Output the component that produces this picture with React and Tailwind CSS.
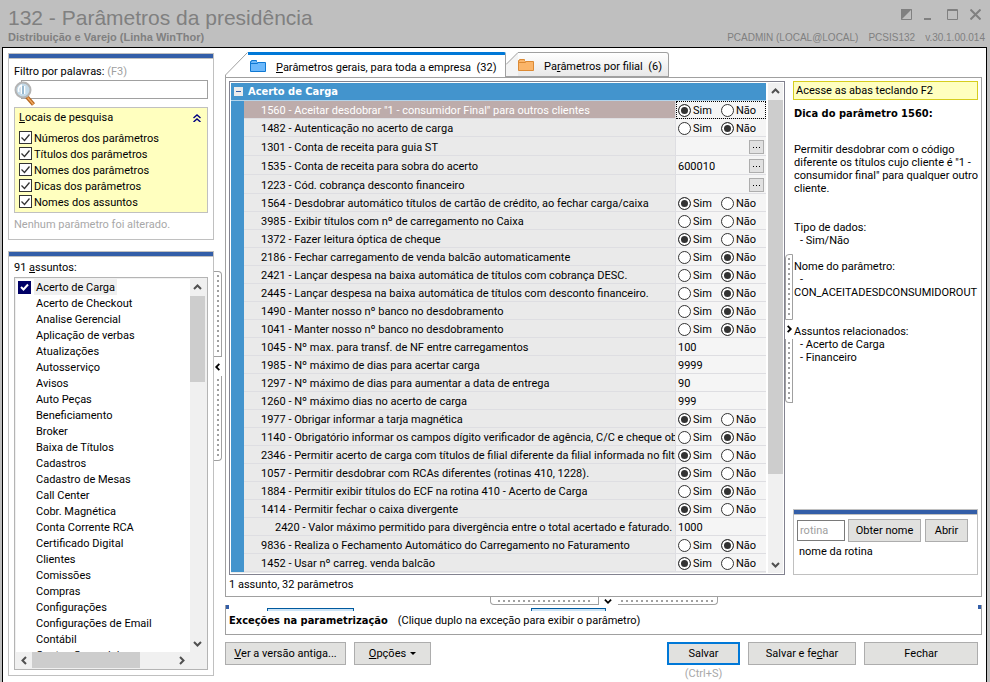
import React from "react";

const params = [
  ["1560", 'Aceitar desdobrar "1 - consumidor Final" para outros clientes', "sim"],
  ["1482", "Autenticação no acerto de carga", "nao"],
  ["1301", "Conta de receita para guia ST", "pick", ""],
  ["1535", "Conta de receita para sobra do acerto", "pick", "600010"],
  ["1223", "Cód. cobrança desconto financeiro", "pick", ""],
  ["1564", "Desdobrar automático títulos de cartão de crédito, ao fechar carga/caixa", "sim"],
  ["3985", "Exibir títulos com nº de carregamento no Caixa", "nenhum"],
  ["1372", "Fazer leitura óptica de cheque", "sim"],
  ["2186", "Fechar carregamento de venda balcão automaticamente", "nao"],
  ["2421", "Lançar despesa na baixa automática de títulos com cobrança DESC.", "nao"],
  ["2445", "Lançar despesa na baixa automática de títulos com desconto financeiro.", "nao"],
  ["1490", "Manter nosso nº banco no desdobramento", "nao"],
  ["1041", "Manter nosso nº banco no desdobramento", "nao"],
  ["1045", "Nº max. para transf. de NF entre carregamentos", "text", "100"],
  ["1985", "Nº máximo de dias para acertar carga", "text", "9999"],
  ["1297", "Nº máximo de dias para aumentar a data de entrega", "text", "90"],
  ["1260", "Nº máximo dias no acerto de carga", "text", "999"],
  ["1977", "Obrigar informar a tarja magnética", "sim"],
  ["1140", "Obrigatório informar os campos dígito verificador de agência, C/C e cheque obr", "nao"],
  ["2346", "Permitir acerto de carga com títulos de filial diferente da filial informada no filtro", "sim"],
  ["1057", "Permitir desdobrar com RCAs diferentes (rotinas 410, 1228).", "sim"],
  ["1884", "Permitir exibir títulos do ECF na rotina 410 - Acerto de Carga", "nao"],
  ["1414", "Permitir fechar o caixa divergente", "sim"],
  ["2420", "Valor máximo permitido para divergência entre o total acertado e faturado.", "text", "1000"],
  ["9836", "Realiza o Fechamento Automático do Carregamento no Faturamento", "nao"],
  ["1452", "Usar nº carreg. venda balcão", "sim"],
];

const subjects = [
  "Acerto de Carga", "Acerto de Checkout", "Analise Gerencial", "Aplicação de verbas",
  "Atualizações", "Autosserviço", "Avisos", "Auto Peças", "Beneficiamento", "Broker",
  "Baixa de Títulos", "Cadastros", "Cadastro de Mesas", "Call Center", "Cobr. Magnética",
  "Conta Corrente RCA", "Certificado Digital", "Clientes", "Comissões", "Compras",
  "Configurações", "Configurações de Email", "Contábil", "Contas Gerenciais",
];

function Chevron({ dir, className = "" }) {
  const d = { up: "M1 6 L4.5 2.5 L8 6", down: "M1 3 L4.5 6.5 L8 3", left: "M6 1 L2.5 4.5 L6 8", right: "M3 1 L6.5 4.5 L3 8" }[dir];
  return (
    <svg width="9" height="9" viewBox="0 0 9 9" className={className} aria-hidden="true">
      <path d={d} fill="none" stroke="currentColor" strokeWidth="2" />
    </svg>
  );
}

function Folder({ fill, stroke }) {
  return (
    <svg width="16" height="13" viewBox="0 0 16 13" aria-hidden="true" className="shrink-0">
      <path d="M.5 11.5V1.5h1v-1h5v1l1 1h8v9z" fill={fill} stroke={stroke} />
      <path d="M1 3.5h6.5l1-1" fill="none" stroke={stroke} />
    </svg>
  );
}

function BlueBar() {
  return <div className="h-[5px] border-b border-[#c0c0c0] bg-[#335ea8]" />;
}

function Radio({ name, label, checked }) {
  return (
    <label className="flex w-[43px] shrink-0 items-center gap-[2px]">
      <input
        type="radio"
        name={name}
        defaultChecked={checked}
        className="size-[13px] shrink-0 appearance-none rounded-full border border-[#333] bg-white checked:bg-[#333] checked:shadow-[inset_0_0_0_2px_white]"
      />
      {label}
    </label>
  );
}

function ParamRow({ row, index }) {
  const [code, title, kind, value] = row;
  const on = index === 0;
  const pick = kind === "pick";
  const free = pick || kind === "text";
  return (
    <tr className={pick ? "h-[19px]" : "h-[18px]"}>
      <td className="bg-[#4394cd] p-0" />
      <th
        scope="row"
        className={`border-r border-b border-[#dedee2] pt-[2px] pr-0 pb-0 text-left font-normal whitespace-nowrap ${code === "2420" ? "pl-[31px]" : "pl-[17px]"} ${on ? "bg-[#bdacab] text-white" : "bg-[#eaeaea]"}`}
      >
        <div className="overflow-hidden">{code} - {title}</div>
      </th>
      <td className={`border-b border-[#dedee2] bg-[#f5f5f5] px-0 pt-[2px] pb-0 ${on ? "outline-1 -outline-offset-1 outline-dotted outline-black" : ""}`}>
        {free ? (
          <div className="flex items-center pr-[2px] pl-[2px]">
            <input aria-label={title} defaultValue={value} className="h-[13px] w-0 grow bg-transparent outline-none" />
            {pick && (
              <button aria-label="Escolher" className="flex h-[14px] w-[15px] items-center justify-center gap-[2px] border border-[#adadad] bg-[#e1e1e1]">
                <i className="size-px bg-black" />
                <i className="size-px bg-black" />
                <i className="size-px bg-black" />
              </button>
            )}
          </div>
        ) : (
          <div className="flex pl-[2px]">
            <Radio name={`p${code}`} label="Sim" checked={kind === "sim"} />
            <Radio name={`p${code}`} label="Não" checked={kind === "nao"} />
          </div>
        )}
      </td>
    </tr>
  );
}

function VScroll({ thumb }) {
  return (
    <div className="flex w-[15px] shrink-0 flex-col items-center bg-[#f0f0f0] text-[#505050]">
      <div className="flex h-[17px] items-center"><Chevron dir="up" /></div>
      <div className={`w-full bg-[#cdcdcd] ${thumb}`} />
      <div className="mt-auto flex h-[17px] items-center"><Chevron dir="down" /></div>
    </div>
  );
}

function Dots({ vertical }) {
  return vertical ? (
    <span className="w-[2px] bg-[repeating-linear-gradient(to_bottom,#a0a0a0_0_2px,transparent_2px_5px)]" />
  ) : (
    <span className="h-[2px] grow bg-[repeating-linear-gradient(to_right,#a0a0a0_0_2px,transparent_2px_5px)]" />
  );
}

function VSplitter({ dir }) {
  const left = dir === "left";
  return (
    <button aria-label="Recolher painel" className="flex w-[8px] shrink-0 flex-col items-center text-black">
      <span className={`flex w-full flex-1 justify-center border-t border-r border-b border-[#a0a0a0] py-[3px] ${left ? "rounded-tr-[4px]" : "rounded-tl-[4px] border-l"}`}><Dots vertical /></span>
      <span className="flex h-[19px] items-center"><Chevron dir={dir} className="size-[8px]" /></span>
      <span className={`flex w-full flex-1 justify-center border-r border-b border-[#a0a0a0] py-[3px] ${left ? "rounded-br-[4px]" : "rounded-bl-[4px] border-l"}`}><Dots vertical /></span>
    </button>
  );
}

function Btn({ className = "", children }) {
  return <button className={`h-[23px] border border-[#adadad] bg-[#e1e1df] whitespace-nowrap ${className}`}>{children}</button>;
}

const check = "size-[13px] shrink-0";
const bold = "font-['DejaVu_Sans_Condensed','DejaVu_Sans',sans-serif] font-bold";

export default function App() {
  return (
    <div className="flex min-h-screen flex-col bg-[#bfbfbf] pr-[3px] pl-[2px] font-[Roboto,sans-serif] text-[11px] leading-[13px] font-normal text-black">
      <header className="flex h-[47px] justify-between pl-[6px] font-['Liberation_Sans',Arial,sans-serif] text-[#808080]">
        <div>
          <h1 className="mt-[6px] text-[21px] leading-[24px]">132 - Parâmetros da presidência</h1>
          <p className="text-[11px] leading-[15px] font-bold">Distribuição e Varejo (Linha WinThor)</p>
        </div>
        <div className="flex flex-col items-end">
          <div className="mt-[8px] mr-[6px] flex h-[12px] gap-[12px]">
            <button aria-label="Tema">
              <svg width="11" height="11" viewBox="0 0 11 11" className="block"><path d="M.5.5h10v10H.5z" fill="none" stroke="#808080" /><path d="M0 0h11L0 11z" fill="#808080" /></svg>
            </button>
            <button aria-label="Minimizar">
              <svg width="11" height="11" viewBox="0 0 11 11" className="block"><path d="M0 9h7v2H0z" fill="#808080" /></svg>
            </button>
            <button aria-label="Maximizar">
              <svg width="11" height="11" viewBox="0 0 11 11" className="block"><path d="M.5.5h10v10H.5zM0 1.5h11" fill="none" stroke="#808080" /></svg>
            </button>
            <button aria-label="Fechar janela">
              <svg width="11" height="11" viewBox="0 0 11 11" className="block"><path d="M.5.5l10 10M10.5.5l-10 10" fill="none" stroke="#808080" strokeWidth="2" /></svg>
            </button>
          </div>
          <p className="mt-[10px] mr-[2px] flex gap-[10px] text-[10px] leading-[15px]">
            <span>PCADMIN (LOCAL@LOCAL)</span><span>PCSIS132</span><span>v.30.1.00.014</span>
          </p>
        </div>
      </header>

      <main className="flex grow border-x border-t border-black bg-white pt-[5px] pr-[4px] pl-[5px]">
        <div className="flex w-[206px] shrink-0 flex-col">
          <section className="h-[187px] border border-[#c0c0c0]">
            <BlueBar />
            <div className="flex flex-col px-[5px] pt-[6px]">
              <label htmlFor="filtro">Filtro por palavras: <span className="text-[#a0a0a0]">(F3)</span></label>
              <div className="relative mt-[2px] pl-[7px]">
                <input id="filtro" className="block h-[19px] w-full border border-[#a0a0a0] pl-[12px] outline-none" />
                <svg width="22" height="26" viewBox="0 0 22 26" className="absolute top-px left-0" aria-hidden="true">
                  <path d="M12.500 15.500l7 8" stroke="#b5651d" strokeWidth="4" />
                  <path d="M13.500 16.500l6 7" stroke="#f0a860" strokeWidth="1.500" />
                  <circle cx="9" cy="9" r="7.500" fill="#c4dbea" stroke="#b4b4b4" strokeWidth="2" />
                  <path d="M5 11a5 5 0 0 1 3-7M7.500 5v8M10.500 5v8" stroke="#fff" strokeWidth="1.500" fill="none" />
                  <path d="M9 5v8" stroke="#5d8cb0" strokeWidth="1" />
                </svg>
              </div>
              <fieldset className="mt-[8px] h-[106px] border border-[#c0c0c0] bg-[#ffffbf] px-[4px]">
                <div className="mt-[3px] flex items-center justify-between">
                  <span><u>L</u>ocais de pesquisa</span>
                  <button aria-label="Recolher" className="mr-[2px]">
                    <svg width="8" height="8" viewBox="0 0 8 8" className="block"><path d="M.5 4L4 1l3.500 3M.5 8L4 5l3.500 3" fill="none" stroke="#000080" strokeWidth="1.400" /></svg>
                  </button>
                </div>
                <div className="mt-[5px]">
                  {["Números dos parâmetros", "Títulos dos parâmetros", "Nomes dos parâmetros", "Dicas dos parâmetros", "Nomes dos assuntos"].map((t) => (
                    <label key={t} className="flex h-[16px] items-center gap-[2px]">
                      <span className="grid shrink-0">
                        <input type="checkbox" defaultChecked className={`${check} col-start-1 row-start-1 appearance-none border border-[#333] bg-white`} />
                        <svg width="13" height="13" viewBox="0 0 13 13" className="pointer-events-none col-start-1 row-start-1" aria-hidden="true"><path d="M2.500 6.500l3 3 5-6" fill="none" stroke="#333" strokeWidth="1.300" /></svg>
                      </span>
                      <span className="pt-[2px]">{t}</span>
                    </label>
                  ))}
                </div>
              </fieldset>
              <p className="mt-[5px] text-[#a8a8a8]">Nenhum parâmetro foi alterado.</p>
            </div>
          </section>

          <section className="mt-[11px] border border-[#c0c0c0] pb-[5px]">
            <BlueBar />
            <div className="px-[5px] pt-[4px]">
              <p>91 <u>a</u>ssuntos:</p>
              <div className="mt-[3px] border border-[#b4b4b4] bg-[#f0f0f0] p-px pr-[2px]">
                <div className="flex h-[373px] overflow-hidden">
                  <ul className="min-w-0 grow overflow-hidden bg-white">
                    {subjects.map((s, i) => (
                      <li key={s}>
                        <label className="flex h-[16px] items-center pl-[2px]">
                          {i === 0 ? (
                            <span className="grid shrink-0">
                              <input type="checkbox" defaultChecked className={`${check} col-start-1 row-start-1 appearance-none bg-[#000066]`} />
                              <svg width="13" height="13" viewBox="0 0 13 13" className="pointer-events-none col-start-1 row-start-1" aria-hidden="true"><path d="M3 6l2.500 2.500 4.500-5" fill="none" stroke="#fff" strokeWidth="2" /></svg>
                            </span>
                          ) : (
                            <input type="checkbox" className={`${check} appearance-none`} />
                          )}
                          <span className={`ml-[3px] px-[2px] pt-[2px] leading-[14px] ${i === 0 ? "bg-[#f0f0f0]" : ""}`}>{s}</span>
                        </label>
                      </li>
                    ))}
                  </ul>
                  <VScroll thumb="h-[86px]" />
                </div>
                <div className="mr-[15px] flex h-[16px] items-center text-[#505050]">
                  <span className="flex w-[16px] justify-center"><Chevron dir="left" /></span>
                  <span className="h-full w-[108px] bg-[#cdcdcd]" />
                  <span className="ml-auto flex w-[17px] justify-center"><Chevron dir="right" /></span>
                </div>
              </div>
            </div>
          </section>
        </div>

        <div className="mt-[218px] flex h-[190px] shrink-0 pr-[3px]">
          <VSplitter dir="left" />
        </div>

        <div className="flex min-w-0 grow flex-col">
          <nav className="flex h-[24px] items-end">
            <button className="flex h-[25px] w-[281px] items-stretch">
              <svg width="23" height="25" viewBox="0 0 23 25" className="shrink-0"><path d="M.5 25V23L22.500.5" fill="none" stroke="#a0a0a0" /></svg>
              <span className="flex grow items-center gap-[10px] rounded-tr-[2px] border-t-[3px] border-r border-t-[#0078d7] border-r-[#a0a0a0] pl-[2px] whitespace-nowrap">
                <Folder fill="#6cb8fb" stroke="#0f78d2" />
                <span className="pt-[3px]"><u>P</u>arâmetros gerais, para toda a empresa&nbsp; (32)</span>
              </span>
            </button>
            <button className="flex h-[25px] w-[163px] items-stretch">
              <svg width="12" height="25" viewBox="0 0 12 25" className="shrink-0"><path d="M0 12.500L12 .5V24H0z" fill="#f4f4f4" /><path d="M0 12.500L12 .5M0 24.500H12" fill="none" stroke="#a0a0a0" /></svg>
              <span className="flex grow items-center gap-[10px] rounded-tr-[3px] border-t border-r border-b border-[#a0a0a0] bg-linear-to-b from-white to-[#e8e8e8] pt-[2px] whitespace-nowrap">
                <Folder fill="#fbb569" stroke="#dc8a35" />
                <span className="pt-[2px]">Pa<u>r</u>âmetros por filial&nbsp; (6)</span>
              </span>
            </button>
          </nav>

          <section className="border border-[#a0a0a0] pt-[3px] pr-[3px] pl-[3px]">
            <div className="flex">
              <div className="flex h-[494px] min-w-0 grow border border-[#82828f] p-px">
                <div className="mr-[2px] min-w-0 grow overflow-hidden bg-[#eaeaea]">
                  <table className="w-full table-fixed border-separate border-spacing-0">
                    <colgroup><col className="w-[13px]" /><col /><col className="w-[90px]" /></colgroup>
                    <thead>
                      <tr className="h-[18px] bg-[#4394cd]">
                        <th colSpan="3" className="border-b border-white/60 p-0 text-left text-white">
                          <div className={`flex items-center gap-[5px] pl-[3px] ${bold}`}>
                            <button aria-label="Recolher grupo" className="flex size-[9px] items-center justify-center bg-[#ececec]"><i className="h-px w-[5px] bg-[#335ea8]" /></button>
                            Acerto de Carga
                          </div>
                        </th>
                      </tr>
                    </thead>
                    <tbody>
                      {params.map((r, i) => <ParamRow key={r[0]} row={r} index={i} />)}
                    </tbody>
                  </table>
                </div>
                <VScroll thumb="h-[374px]" />
              </div>

              <div className="flex shrink-0 pt-[173px]">
                <div className="flex h-[149px]"><VSplitter dir="right" /></div>
              </div>

              <aside className="flex w-[185px] shrink-0 flex-col">
                <p className="h-[19px] border border-[#d6cd1e] bg-[#ffffbf] pt-[2px] pl-[2px]">Acesse as abas teclando F2</p>
                <div className="overflow-hidden pt-[7px] pl-px">
                  <h2 className={bold}>Dica do parâmetro 1560:</h2>
                  <p className="mt-[23px]">Permitir desdobrar com o código diferente os títulos cujo cliente é "1 - consumidor final" para qualquer outro cliente.</p>
                  <p className="mt-[26px]">Tipo de dados:</p>
                  <p className="pl-[6px]">- Sim/Não</p>
                  <p className="mt-[13px]">Nome do parâmetro:</p>
                  <p className="pl-[6px]">-</p>
                  <p className="overflow-hidden">CON_ACEITADESDCONSUMIDOROUT</p>
                  <p className="mt-[26px]">Assuntos relacionados:</p>
                  <p className="pl-[6px]">- Acerto de Carga</p>
                  <p className="pl-[6px]">- Financeiro</p>
                </div>
                <div className="mt-auto h-[66px] border border-[#c0c0c0]">
                  <BlueBar />
                  <div className="flex items-center gap-[3px] pt-[4px] pl-[3px]">
                    <input aria-label="rotina" placeholder="rotina" className="h-[21px] w-[48px] border border-[#7a7a7a] px-[2px] outline-none placeholder:text-[#a0a0a0]" />
                    <Btn className="w-[73px]">Obter nome</Btn>
                    <Btn className="ml-px w-[43px]">Abrir</Btn>
                  </div>
                  <p className="mt-[3px] pl-[5px]">nome da rotina</p>
                </div>
              </aside>
            </div>
            <p className="pt-[3px] pb-[5px]">1 assunto, 32 parâmetros</p>
          </section>

          <button aria-label="Recolher exceções" className="mx-auto flex h-[8px] w-[228px] items-stretch">
            <span className="flex flex-1 items-center rounded-bl-[4px] border-x border-b border-[#a0a0a0] px-[7px]"><Dots /></span>
            <span className="flex w-[19px] items-center justify-center"><Chevron dir="down" className="size-[8px]" /></span>
            <span className="flex flex-1 items-center rounded-br-[4px] border-r border-b border-[#a0a0a0] px-[3px]"><Dots /></span>
          </button>

          <section className="h-[30px] border-x border-b border-[#a0a0a0]">
            <div className="flex h-[6px] items-end">
              <i className="h-[4px] w-[3px] self-start bg-[#335ea8]" />
              <i className="ml-[38px] h-[3px] w-[87px] border-x border-t border-[#005a9e] bg-[#cce4f7]" />
              <i className="ml-[177px] h-[3px] w-[75px] border-x border-t border-[#005a9e] bg-[#cce4f7]" />
              <i className="ml-auto h-[4px] w-[3px] self-start bg-[#335ea8]" />
            </div>
            <p className="flex gap-[10px] pt-[3px] pl-[3px]"><b className={bold}>Exceções na parametrização</b><span>(Clique duplo na exceção para exibir o parâmetro)</span></p>
          </section>

          <div className="flex items-start gap-[8px] pt-[7px] pr-[4px]">
            <Btn className="w-[121px]"><u>V</u>er a versão antiga...</Btn>
            <Btn className="flex w-[77px] items-center justify-center gap-[4px]">
              <span><u>O</u>pções</span><i className="border-x-[3px] border-t-[3px] border-x-transparent border-t-black" />
            </Btn>
            <div className="ml-auto flex w-[73px] flex-col items-center">
              <button className="h-[23px] w-full border-2 border-[#0078d7] bg-[#e1e1df]">Salvar</button>
              <span className="pt-[2px] text-[#a8a8a8]">(Ctrl+S)</span>
            </div>
            <Btn className="w-[108px]">Salvar e fe<u>c</u>har</Btn>
            <Btn className="w-[114px]">Fechar</Btn>
          </div>
        </div>
      </main>
    </div>
  );
}
